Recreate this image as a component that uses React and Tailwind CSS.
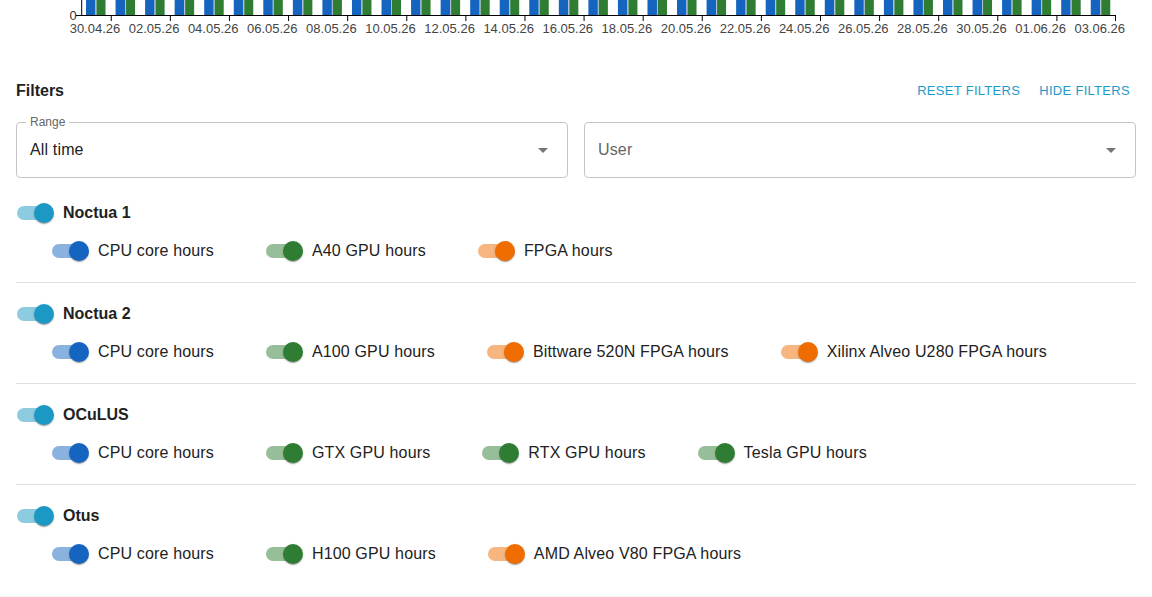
import React from "react";

// --- chart strip at the top (only the bottom of the bars is visible) ---
const DAYS = 35;
const AXIS_X0 = 81.7;
const AXIS_X1 = 1116;
const BAND = (AXIS_X1 - AXIS_X0) / DAYS;

const dayLabel = (i) => {
    const d = new Date(2026, 3, 30 + i);
    const dd = String(d.getDate()).padStart(2, "0");
    const mm = String(d.getMonth() + 1).padStart(2, "0");
    return `${dd}.${mm}.26`;
};

const UsageChart = () => {
    const days = Array.from({ length: DAYS }, (_, i) => i);
    return (
        <svg width="1152" height="40" className="block shrink-0" style={{ fontFamily: '"Liberation Sans", Arial, sans-serif' }}>
            {days.map((i) => {
                const x = AXIS_X0 + i * BAND;
                return (
                    <g key={i}>
                        <rect x={x + 4.3} y={0} width={9.5} height={15} fill="#1565c0" />
                        <rect x={x + 13.8} y={0} width={1} height={15} fill="#a7bcd4" />
                        <rect x={x + 14.8} y={0} width={9} height={15} fill="#2e7d32" />
                    </g>
                );
            })}
            {/* axes */}
            <line x1={AXIS_X0} y1={0} x2={AXIS_X0} y2={15.5} stroke="#000" strokeWidth="1" />
            <line x1={AXIS_X0 - 6} y1={15.5} x2={AXIS_X1} y2={15.5} stroke="#000" strokeWidth="1" />
            <text x={73} y={20} fontSize="13" fill="#333" textAnchor="middle">0</text>
            {days.filter((i) => i % 2 === 1).map((i) => (
                <line key={`t${i}`} x1={AXIS_X0 + i * BAND} y1={15.5} x2={AXIS_X0 + i * BAND} y2={21} stroke="#000" />
            ))}
            <line x1={AXIS_X1 - 0.5} y1={15.5} x2={AXIS_X1 - 0.5} y2={21} stroke="#000" />
            {days.filter((i) => i % 2 === 0).map((i) => (
                <text key={`l${i}`} x={AXIS_X0 + (i + 0.5) * BAND - 1.5} y={33} fontSize="13" fill="#444" textAnchor="middle">
                    {dayLabel(i)}
                </text>
            ))}
        </svg>
    );
};

// --- MUI-like switch ---
const COLORS = {
    cluster: { thumb: "bg-[#1c98c4]", track: "bg-[#8dcbe1]" },
    cpu: { thumb: "bg-[#1565c0]", track: "bg-[#8ab2df]" },
    gpu: { thumb: "bg-[#2e7d32]", track: "bg-[#96be98]" },
    fpga: { thumb: "bg-[#ef6c00]", track: "bg-[#f7b57f]" },
};

const Toggle = ({ kind }) => {
    const c = COLORS[kind];
    return (
        <span className="relative inline-block w-[37px] h-5 shrink-0">
            <span className={`absolute left-0 top-[3px] w-[34px] h-[14px] rounded-full ${c.track}`} />
            <span className={`absolute left-[17px] top-0 w-5 h-5 rounded-full ${c.thumb} shadow-[0_2px_1px_-1px_rgba(0,0,0,0.2),0_1px_1px_0_rgba(0,0,0,0.14),0_1px_3px_0_rgba(0,0,0,0.12)]`} />
        </span>
    );
};

const clusters = [
    {
        name: "Noctua 1",
        resources: [
            { label: "CPU core hours", kind: "cpu" },
            { label: "A40 GPU hours", kind: "gpu" },
            { label: "FPGA hours", kind: "fpga" },
        ],
    },
    {
        name: "Noctua 2",
        resources: [
            { label: "CPU core hours", kind: "cpu" },
            { label: "A100 GPU hours", kind: "gpu" },
            { label: "Bittware 520N FPGA hours", kind: "fpga" },
            { label: "Xilinx Alveo U280 FPGA hours", kind: "fpga" },
        ],
    },
    {
        name: "OCuLUS",
        resources: [
            { label: "CPU core hours", kind: "cpu" },
            { label: "GTX GPU hours", kind: "gpu" },
            { label: "RTX GPU hours", kind: "gpu" },
            { label: "Tesla GPU hours", kind: "gpu" },
        ],
    },
    {
        name: "Otus",
        resources: [
            { label: "CPU core hours", kind: "cpu" },
            { label: "H100 GPU hours", kind: "gpu" },
            { label: "AMD Alveo V80 FPGA hours", kind: "fpga" },
        ],
    },
];

const ArrowDrop = () => (
    <svg className="w-6 h-6 text-[#757575]" viewBox="0 0 24 24" fill="currentColor">
        <path d="M7 10l5 5 5-5z" />
    </svg>
);

const App = () => {
    return (
        <div className="w-[1152px] h-[597px] overflow-hidden bg-white" style={{ fontFamily: '"Liberation Sans", Arial, Helvetica, sans-serif' }}>
            <div className="h-[596px] bg-white rounded-b-[4px] shadow-[0_1px_2px_rgba(0,0,0,0.06)] flex flex-col">
                <UsageChart />

                <div className="px-4 flex flex-col">
                    {/* Filters header */}
                    <div className="mt-[39px] h-6 flex items-center justify-between">
                        <h3 className="text-[16px] font-bold text-[#222]">Filters</h3>
                        <div className="flex items-center gap-[19px] pr-[6px]">
                            <button className="text-[13px] tracking-[0.3px] text-[#1e9bc8] uppercase">Reset filters</button>
                            <button className="text-[13px] tracking-[0.3px] text-[#1e9bc8] uppercase">Hide filters</button>
                        </div>
                    </div>

                    {/* Selects */}
                    <div className="mt-[19px] grid grid-cols-2 gap-4">
                        <div className="relative h-14 border border-[#c4c4c4] rounded-[4px] flex items-center pl-[13px] pr-[12px]">
                            <span className="absolute left-[9px] -top-[10px] px-[4px] bg-white text-[12px] text-[#666]">Range</span>
                            <span className="flex-1 text-[16px] tracking-[0.15px] text-[#222]">All time</span>
                            <ArrowDrop />
                        </div>
                        <div className="relative h-14 border border-[#c4c4c4] rounded-[4px] flex items-center pl-[13px] pr-[12px]">
                            <span className="flex-1 text-[16px] tracking-[0.15px] text-[#666]">User</span>
                            <ArrowDrop />
                        </div>
                    </div>

                    {/* Cluster sections */}
                    <div className="mt-1 flex flex-col">
                        {clusters.map((cl, idx) => (
                            <div
                                key={cl.name}
                                className={`pt-[12px] ${idx < clusters.length - 1 ? "pb-[12px] border-b border-[#e0e0e0]" : ""}`}
                            >
                                <div className="h-[38px] flex items-center pl-px">
                                    <Toggle kind="cluster" />
                                    <span className="ml-[9px] text-[16px] font-bold text-[#222]">{cl.name}</span>
                                </div>
                                <div className="h-[38px] flex items-center pl-9 gap-[52px]">
                                    {cl.resources.map((r) => (
                                        <div key={r.label} className="flex items-center">
                                            <Toggle kind={r.kind} />
                                            <span className="ml-[9px] text-[16px] tracking-[0.15px] text-[#222]">{r.label}</span>
                                        </div>
                                    ))}
                                </div>
                            </div>
                        ))}
                    </div>
                </div>
            </div>
        </div>
    );
};

export default App;
